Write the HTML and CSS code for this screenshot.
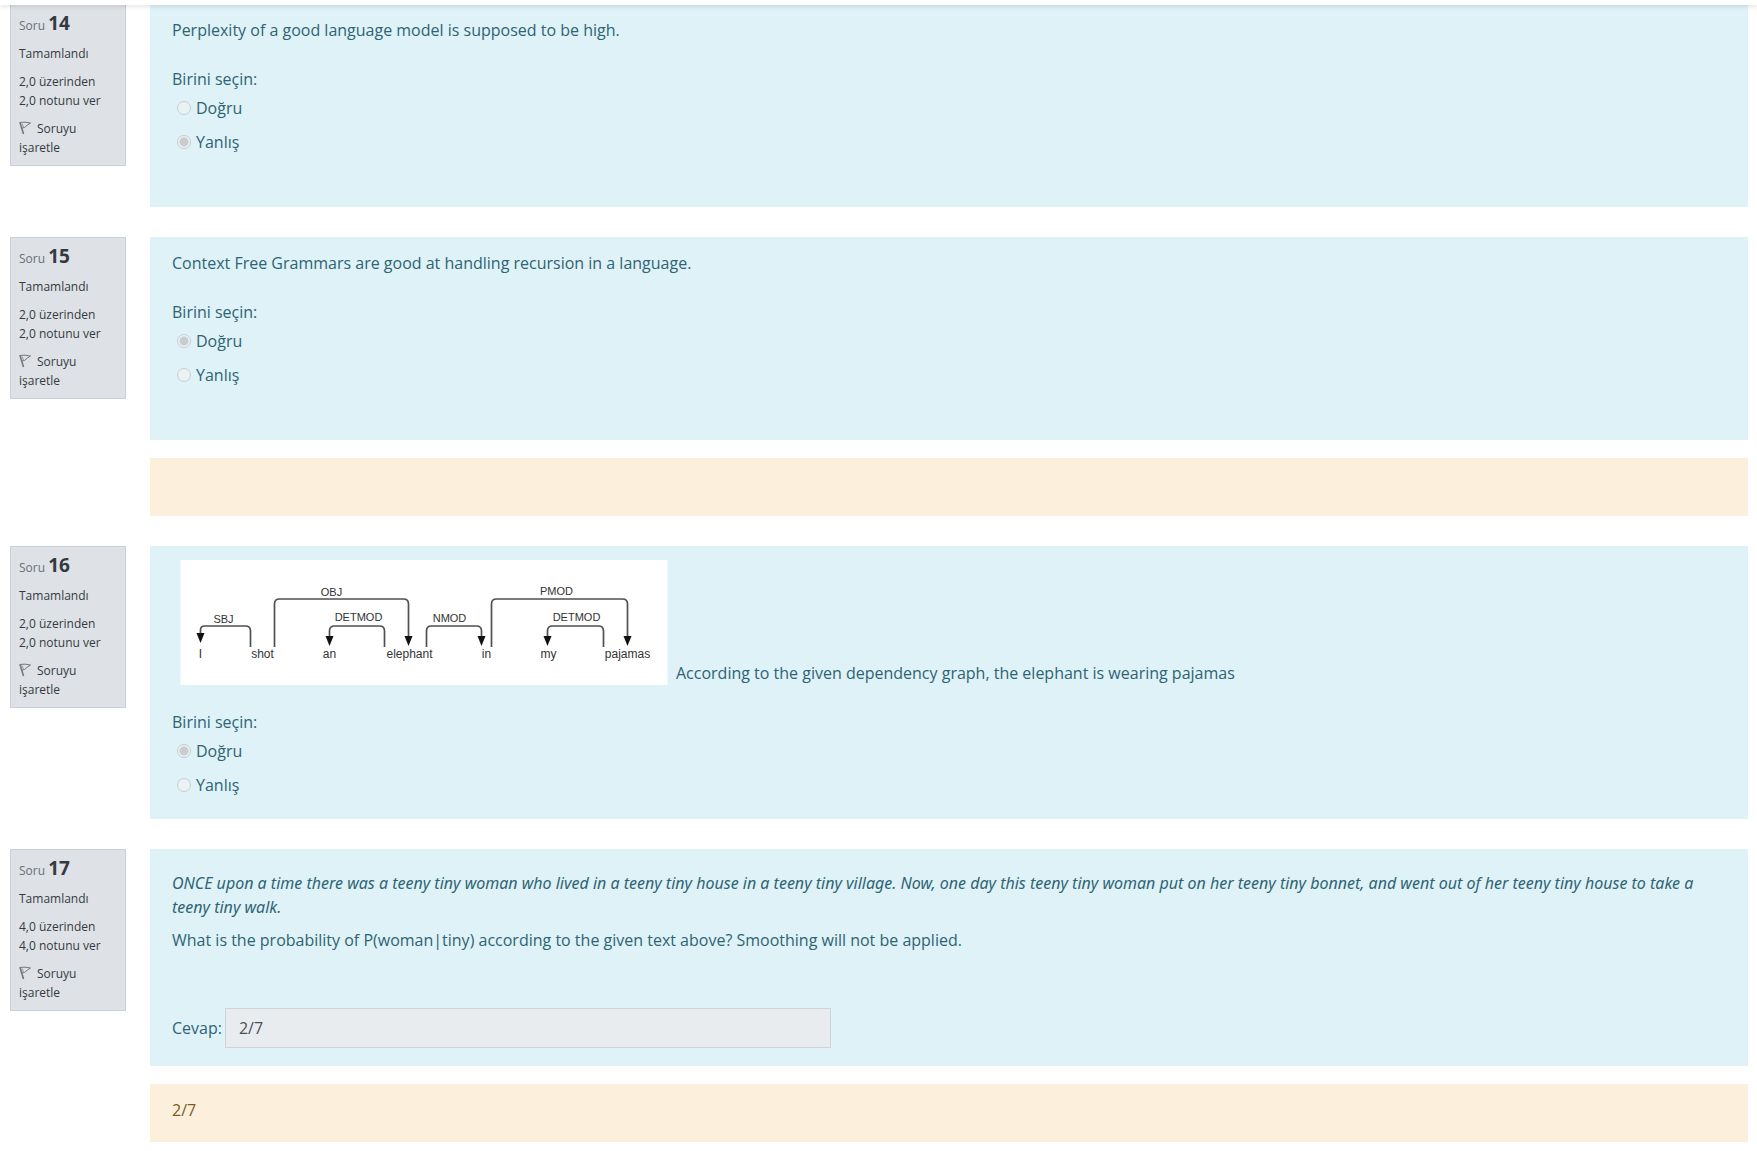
FILE: index.html
```
<!DOCTYPE html>
<html lang="tr">
<head>
<meta charset="utf-8">
<meta name="viewport" content="width=device-width, initial-scale=1">
<title>Sınav incelemesi</title>
<link rel="stylesheet" href="styles.css">
</head>
<body>
<svg width="0" height="0" class="symbols" aria-hidden="true">
  <symbol id="flag" viewBox="0 0 12 14">
    <path d="M1 1.500 L4.500 13" fill="none" stroke="#777" stroke-width="1.600"/>
    <path d="M0.500 1.500 Q6 0.500 11.500 2 Q8 4 5.500 6.500 L3 7" fill="none" stroke="#777" stroke-width="1"/>
    <path d="M3 2.500 L4.500 6" fill="none" stroke="#999" stroke-width="1"/>
  </symbol>
</svg>
<header class="topbar"></header>
<main class="quiz">

  <section class="question">
    <aside class="info">
      <h3 class="info-title">Soru <span class="info-number">14</span></h3>
      <p class="info-line">Tamamlandı</p>
      <p class="info-line">2,0 üzerinden 2,0 notunu ver</p>
      <a class="info-line flag-link" href="#"><svg class="flag" aria-hidden="true"><use href="#flag"/></svg>Soruyu işaretle</a>
    </aside>
    <div class="content">
      <div class="formulation roomy">
        <p class="qtext">Perplexity of a good language model is supposed to be high.</p>
        <fieldset class="answers">
          <legend class="prompt">Birini seçin:</legend>
          <label class="option"><input class="radio" type="radio" name="q14" disabled>Doğru</label>
          <label class="option"><input class="radio" type="radio" name="q14" disabled checked>Yanlış</label>
        </fieldset>
      </div>
    </div>
  </section>

  <section class="question">
    <aside class="info">
      <h3 class="info-title">Soru <span class="info-number">15</span></h3>
      <p class="info-line">Tamamlandı</p>
      <p class="info-line">2,0 üzerinden 2,0 notunu ver</p>
      <a class="info-line flag-link" href="#"><svg class="flag" aria-hidden="true"><use href="#flag"/></svg>Soruyu işaretle</a>
    </aside>
    <div class="content">
      <div class="formulation roomy">
        <p class="qtext">Context Free Grammars are good at handling recursion in a language.</p>
        <fieldset class="answers">
          <legend class="prompt">Birini seçin:</legend>
          <label class="option"><input class="radio" type="radio" name="q15" disabled checked>Doğru</label>
          <label class="option"><input class="radio" type="radio" name="q15" disabled>Yanlış</label>
        </fieldset>
      </div>
      <div class="feedback"></div>
    </div>
  </section>

  <section class="question">
    <aside class="info">
      <h3 class="info-title">Soru <span class="info-number">16</span></h3>
      <p class="info-line">Tamamlandı</p>
      <p class="info-line">2,0 üzerinden 2,0 notunu ver</p>
      <a class="info-line flag-link" href="#"><svg class="flag" aria-hidden="true"><use href="#flag"/></svg>Soruyu işaretle</a>
    </aside>
    <div class="content">
      <div class="formulation">
        <div class="qtext figure-text">
          <svg class="graph" viewBox="0 0 487 125" role="img" aria-label="Dependency graph">
            <rect width="487" height="125" fill="#fff"/>
            <g fill="none" stroke="#505050" stroke-width="1.700">
              <path d="M20 74 V70 Q20 66 24 66 H65 Q70 66 70 71 V87"/>
              <path d="M94 87 V44 Q94 39 99 39 H223 Q228 39 228 44 V77"/>
              <path d="M149 77 V71 Q149 66 154 66 H199 Q204 66 204 71 V87"/>
              <path d="M246 87 V71 Q246 66 251 66 H296 Q301 66 301 71 V77"/>
              <path d="M311 87 V44 Q311 39 316 39 H442 Q447 39 447 44 V77"/>
              <path d="M367 77 V71 Q367 66 372 66 H418 Q423 66 423 71 V87"/>
            </g>
            <g fill="#111">
              <path d="M16 73 h8 l-4 10z"/>
              <path d="M224 76 h8 l-4 10z"/>
              <path d="M145 76 h8 l-4 10z"/>
              <path d="M297 76 h8 l-4 10z"/>
              <path d="M443 76 h8 l-4 10z"/>
              <path d="M363 76 h8 l-4 10z"/>
            </g>
            <g class="graph-label">
              <text x="43" y="63">SBJ</text>
              <text x="151" y="36">OBJ</text>
              <text x="178" y="61">DETMOD</text>
              <text x="269" y="62">NMOD</text>
              <text x="376" y="35">PMOD</text>
              <text x="396" y="61">DETMOD</text>
            </g>
            <g class="graph-word">
              <text x="20" y="98">I</text>
              <text x="82" y="98">shot</text>
              <text x="149" y="98">an</text>
              <text x="229" y="98">elephant</text>
              <text x="306" y="98">in</text>
              <text x="368" y="98">my</text>
              <text x="447" y="98">pajamas</text>
            </g>
          </svg>
          <span>According to the given dependency graph, the elephant is wearing pajamas</span>
        </div>
        <fieldset class="answers">
          <legend class="prompt">Birini seçin:</legend>
          <label class="option"><input class="radio" type="radio" name="q16" disabled checked>Doğru</label>
          <label class="option"><input class="radio" type="radio" name="q16" disabled>Yanlış</label>
        </fieldset>
      </div>
    </div>
  </section>

  <section class="question">
    <aside class="info">
      <h3 class="info-title">Soru <span class="info-number">17</span></h3>
      <p class="info-line">Tamamlandı</p>
      <p class="info-line">4,0 üzerinden 4,0 notunu ver</p>
      <a class="info-line flag-link" href="#"><svg class="flag" aria-hidden="true"><use href="#flag"/></svg>Soruyu işaretle</a>
    </aside>
    <div class="content">
      <div class="formulation short-answer">
        <p class="passage">ONCE upon a time there was a teeny tiny woman who lived in a teeny tiny house in a teeny tiny village. Now, one day this teeny tiny woman put on her teeny tiny bonnet, and went out of her teeny tiny house to take a teeny&nbsp;tiny&nbsp;walk.</p>
        <p class="ask">What is the probability of P(woman|tiny) according to the given text above? Smoothing will not be applied.</p>
        <div class="answer-row">
          <label for="answer17">Cevap:</label>
          <input class="answer-input" id="answer17" type="text" value="2/7" readonly>
        </div>
      </div>
      <div class="feedback">2/7</div>
    </div>
  </section>

</main>
</body>
</html>
```
FILE: styles.css
```
* {
  box-sizing: border-box;
}

body {
  margin: 0;
  background: #fff;
  color: #343a40;
  font-family: "Segoe UI", "Open Sans", "Noto Sans", sans-serif;
  font-size: 16px;
  line-height: 24px;
}

p,
h3 {
  margin: 0;
}

.symbols {
  position: absolute;
}

.topbar {
  position: fixed;
  top: 0;
  left: 0;
  right: 0;
  height: 5px;
  background: #fff;
  box-shadow: 0 2px 4px rgba(0, 0, 0, 0.1);
}

.quiz {
  display: flex;
  flex-direction: column;
  gap: 30px;
  padding: 4px 9px 9px 10px;
}

.question {
  display: flex;
  align-items: flex-start;
  gap: 24px;
}

.info {
  flex: 0 0 116px;
  display: flex;
  flex-direction: column;
  gap: 9px;
  padding: 9px 16px 8px 8px;
  border: 1px solid #cad0d7;
  background: #dee2e6;
  font-size: 12px;
  line-height: 19px;
}

.info-title {
  font-size: 12px;
  font-weight: 400;
  line-height: 18px;
  color: #6a6f75;
}

.info-number {
  font-size: 19px;
  font-weight: 700;
  line-height: 18px;
  color: #343a40;
}

.flag-link {
  color: inherit;
  text-decoration: none;
}

.flag {
  width: 12px;
  height: 14px;
  margin-right: 6px;
  vertical-align: -2px;
}

.content {
  flex: 1;
  min-width: 0;
  display: flex;
  flex-direction: column;
  gap: 18px;
}

.formulation {
  padding: 14px 22px 22px;
  background: #def2f8;
  color: #2f6473;
}

.roomy {
  padding-bottom: 53px;
}

.qtext {
  margin-bottom: 25px;
}

.figure-text {
  display: flex;
  align-items: flex-end;
  gap: 8px;
  padding-left: 8px;
}

.graph {
  flex: none;
  width: 488px;
  height: 125px;
}

.graph-label,
.graph-word {
  font-family: "Liberation Sans", Arial, sans-serif;
  text-anchor: middle;
  fill: #333;
}

.graph-label {
  font-size: 11px;
}

.graph-word {
  font-size: 12px;
}

.answers {
  display: flex;
  flex-direction: column;
  gap: 10px;
  margin: 0;
  padding: 0;
  border: 0;
}

.prompt {
  margin-bottom: 5px;
  padding: 0;
}

.option {
  display: flex;
  align-items: center;
  gap: 5px;
  padding-left: 5px;
}

.radio {
  appearance: none;
  width: 14px;
  height: 14px;
  margin: 0;
  border: 1px solid #c8cdd0;
  border-radius: 50%;
  background: #ebf2f4;
}

.radio:checked {
  background: radial-gradient(circle, #c8cdd0 4px, #ebf2f4 5px);
}

.short-answer {
  padding: 22px 22px 18px;
}

.passage {
  margin-bottom: 9px;
  font-family: "Segoe UI", "Noto Sans", "Open Sans", sans-serif;
  font-style: italic;
}

.ask {
  margin-bottom: 56px;
}

.answer-row {
  display: flex;
  align-items: center;
  gap: 3px;
}

.answer-input {
  width: 39%;
  height: 40px;
  padding: 0 13px;
  border: 1px solid #ced4da;
  border-radius: 0;
  background: #e9ecef;
  color: #495057;
  font: inherit;
}

.feedback {
  min-height: 58px;
  padding: 14px 22px 20px;
  background: #fcefdc;
  color: #7d5a29;
}
```
